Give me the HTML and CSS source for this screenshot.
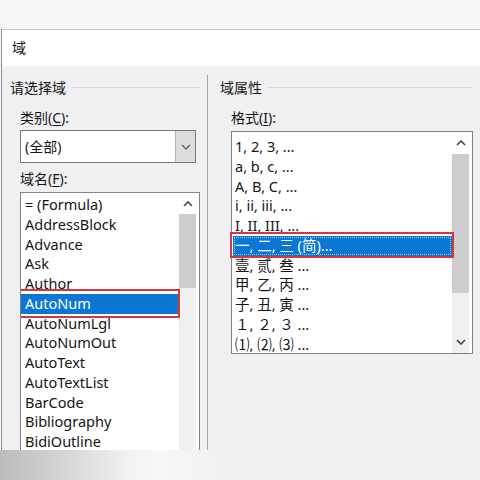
FILE: index.html
```html
<!DOCTYPE html>
<html lang="zh-CN">
<head>
<meta charset="utf-8">
<link rel="stylesheet" href="styles.css">
</head>
<body>
<div class="top-strip"></div>
<div class="dialog">
  <div class="titlebar">域</div>
  <div class="dbody">
    <div class="col col-left">
      <div class="group-head"><span>请选择域</span><i class="rule"></i></div>
      <div class="label">类别(<u>C</u>):</div>
      <div class="combo">
        <div class="combo-text">(全部)</div>
        <div class="combo-btn">
          <svg width="10" height="6" viewBox="0 0 10 6"><polyline points="1,1 5,5 9,1" fill="none" stroke="#555" stroke-width="1.2"/></svg>
        </div>
      </div>
      <div class="label label2">域名(<u>F</u>):</div>
      <div class="listbox lb-left">
        <div class="items">
          <div class="item">= (Formula)</div>
          <div class="item">AddressBlock</div>
          <div class="item">Advance</div>
          <div class="item">Ask</div>
          <div class="item">Author</div>
          <div class="item sel">AutoNum<span class="mark mark-left"></span></div>
          <div class="item">AutoNumLgl</div>
          <div class="item">AutoNumOut</div>
          <div class="item">AutoText</div>
          <div class="item">AutoTextList</div>
          <div class="item">BarCode</div>
          <div class="item">Bibliography</div>
          <div class="item">BidiOutline</div>
        </div>
        <div class="sbar sbar-left">
          <div class="sb-btn sb-up-l"><svg width="10" height="6" viewBox="0 0 10 6"><polyline points="1,5 5,1 9,5" fill="none" stroke="#444" stroke-width="1.6"/></svg></div>
          <div class="thumb thumb-left"></div>
        </div>
      </div>
    </div>
    <div class="divider"></div>
    <div class="col col-right">
      <div class="group-head gh-right"><span>域属性</span><i class="rule"></i></div>
      <div class="label lbl-right">格式(<u>I</u>):</div>
      <div class="listbox lb-right">
        <div class="items items-right">
          <div class="item">1, 2, 3, ...</div>
          <div class="item">a, b, c, ...</div>
          <div class="item">A, B, C, ...</div>
          <div class="item">i, ii, iii, ...</div>
          <div class="item">I, II, III, ...</div>
          <div class="item sel focus">一, 二, 三 (简)...<span class="mark mark-right"></span></div>
          <div class="item">壹, 贰, 叁 ...</div>
          <div class="item">甲, 乙, 丙 ...</div>
          <div class="item">子, 丑, 寅 ...</div>
          <div class="item">１, ２, ３ ...</div>
          <div class="item">⑴, ⑵, ⑶ ...</div>
        </div>
        <div class="sbar sbar-right">
          <div class="sb-btn sb-up-r"><svg width="10" height="6" viewBox="0 0 10 6"><polyline points="1,5 5,1 9,5" fill="none" stroke="#444" stroke-width="1.6"/></svg></div>
          <div class="thumb thumb-right"></div>
          <div class="sb-btn sb-down-r"><svg width="10" height="6" viewBox="0 0 10 6"><polyline points="1,1 5,5 9,1" fill="none" stroke="#444" stroke-width="1.6"/></svg></div>
        </div>
      </div>
    </div>
  </div>
</div>
<div class="band"></div>
</body>
</html>
```
FILE: styles.css
```css
html, body {
  margin: 0;
  padding: 0;
  width: 480px;
  height: 480px;
  overflow: hidden;
  background: #f6f6f6;
  font-family: "Noto Sans", "Noto Sans CJK SC", sans-serif;
  font-size: 14px;
  color: #151515;
}
.top-strip {
  height: 29px;
  background: #f6f6f6;
}
.dialog {
  margin-left: 1px;
  border-left: 1px solid #8e8e8e;
  border-top: 1px solid #c4c4c4;
}
.titlebar {
  height: 36px;
  line-height: 36px;
  background: #ffffff;
  padding-left: 10px;
  font-size: 14px;
}
.dbody {
  display: flex;
  height: 384px;
  background: #f0eff1;
}
.col {
  display: flex;
  flex-direction: column;
}
.col-left {
  width: 205px;
}
.divider {
  width: 1px;
  margin-top: 9px;
  background: #a3a3a3;
}
.col-right {
  flex: 1;
}
.group-head {
  display: flex;
  align-items: center;
  height: 20px;
  margin-top: 11px;
  padding-left: 8px;
  margin-right: 7px;
  white-space: nowrap;
}
.gh-right {
  padding-left: 12px;
}
.rule {
  flex: 1;
  height: 1px;
  margin-left: 6px;
  margin-top: 1px;
  background: #d9d9d9;
}
.label {
  height: 20px;
  line-height: 20px;
  margin-top: 11px;
  padding-left: 18px;
}
.label u {
  text-decoration: underline;
  text-underline-offset: 2px;
}
.label2 {
  margin-top: 6px;
}
.lbl-right {
  padding-left: 23px;
}
.combo {
  display: flex;
  margin-top: 2px;
  margin-left: 18px;
  width: 174px;
  height: 31px;
  border: 1px solid #7a7a7a;
  background: #fff;
}
.combo-text {
  flex: 1;
  line-height: 31px;
  padding-left: 4px;
}
.combo-btn {
  width: 19px;
  background: #dcdcdc;
  border-left: 1px solid #b4b4b4;
  display: flex;
  align-items: center;
  justify-content: center;
}
.listbox {
  display: flex;
  background: #fff;
  border: 1px solid #828282;
  margin-top: 3px;
  font-size: 14.5px;
}
.lb-left {
  margin-left: 18px;
  width: 175px;
  flex: 1;
  border-bottom: none;
  overflow: hidden;
  padding-right: 3px;
}
.lb-right {
  margin-left: 23px;
  width: 237px;
  height: 221px;
  padding-right: 3px;
}
.items {
  flex: 1;
  padding-top: 2px;
}
.items-right {
  padding-top: 5px;
  padding-left: 1px;
}
.item {
  position: relative;
  height: 19.75px;
  line-height: 19.75px;
  padding-left: 4px;
  white-space: nowrap;
}
.items-right .item {
  padding-left: 2px;
}
.item.sel {
  background: #0a77d5;
  color: #fff;
}
.item.focus::before {
  content: "";
  position: absolute;
  inset: 1px;
  border: 1px dotted #9fc7ee;
}
.mark {
  position: absolute;
  border: 2.5px solid #d5353c;
  pointer-events: none;
}
.mark-left {
  left: -3px;
  right: -1px;
  top: -5px;
  bottom: -4px;
}
.mark-right {
  left: -3px;
  right: -2px;
  top: -4px;
  bottom: -2px;
}
.sbar {
  width: 17px;
  display: flex;
  flex-direction: column;
  background: #f0f0f0;
}
.sb-btn {
  display: flex;
  align-items: center;
  justify-content: center;
}
.sb-up-l {
  height: 21px;
  background: #fff;
}
.thumb {
  background: #cdcdcd;
}
.thumb-left {
  height: 74px;
}
.sb-up-r {
  height: 22px;
  background: #fff;
}
.thumb-right {
  height: 139px;
}
.sb-down-r {
  margin-top: auto;
  height: 22px;
}
.band {
  height: 30px;
  background: linear-gradient(to right, #bcbcbc 0px, #cfcfcf 50px, #f2f2f2 130px, #f7f7f7 160px, #f0eff1 230px, #f0eff1 480px);
}
```
